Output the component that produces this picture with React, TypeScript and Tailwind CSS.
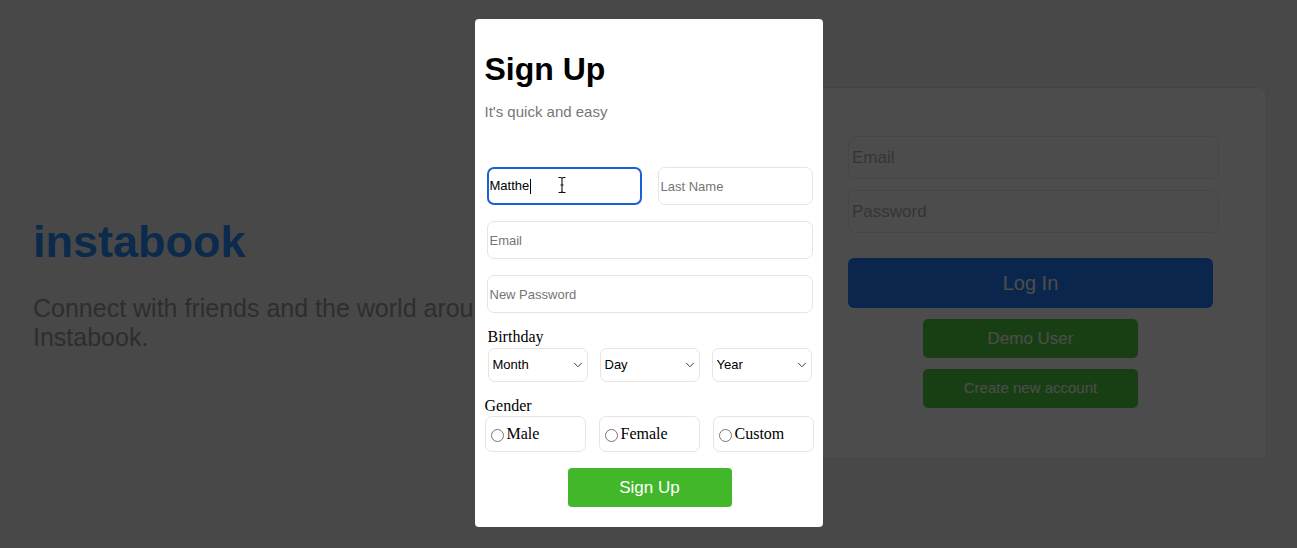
import { ChevronDown } from "lucide-react";

const sans = "font-['Liberation_Sans',Arial,sans-serif]";
const serif = "font-['Liberation_Serif','Times_New_Roman',serif]";

const BirthSelect = ({ label, options }: { label: string; options: string[] }) => (
  <div className="relative w-[100px] h-[34px]">
    <select
      defaultValue={label}
      className={`${sans} appearance-none w-full h-full rounded-[7px] border border-[#ebe3e3] bg-white pl-[4px] text-[13px] text-black outline-none`}
    >
      <option>{label}</option>
      {options.map((o) => (
        <option key={o}>{o}</option>
      ))}
    </select>
    <ChevronDown
      size={14}
      strokeWidth={1.6}
      className="absolute right-[3px] top-[10px] text-[#333] pointer-events-none"
    />
  </div>
);

const GenderOption = ({ label }: { label: string }) => (
  <label className="flex items-center w-[101px] h-[36px] rounded-[7px] border border-[#ebe3e3]">
    <input type="radio" name="gender" className="ml-[5px] mr-[3px] mt-[3px] w-[13px] h-[13px]" />
    <span className={`${serif} text-[16px] leading-[18px] text-black`}>{label}</span>
  </label>
);

const App = () => {
  const months = ["Jan", "Feb", "Mar"];
  const days = ["1", "2", "3"];
  const years = ["2024", "2023", "2022"];

  return (
    <div className={`${sans} relative flex h-[548px] w-full overflow-hidden bg-[#f2f2f2]`}>
      {/* left intro */}
      <div className="shrink-0 w-[633px] pl-[33px] pt-[216px]">
        <h1 className="text-[45px] leading-[52px] font-bold text-[#2a8cff]">instabook</h1>
        <p className="mt-[26px] w-[580px] text-[25px] leading-[29px] text-[#999]">
          Connect with friends and the world around you on Instabook.
        </p>
      </div>

      {/* login card */}
      <div className="ml-auto mr-[30px] mt-[87px] w-[467px] h-[372px] shrink-0 rounded-[8px] border border-[#e5e5e5] bg-white pl-[47px] pt-[48px]">
        <input
          placeholder="Email"
          className="block w-[371px] h-[43px] rounded-[7px] border border-[#ececec] px-[3px] text-[17px] placeholder:text-[#b0b0b0] outline-none"
        />
        <input
          type="password"
          placeholder="Password"
          className="block mt-[11px] w-[371px] h-[43px] rounded-[7px] border border-[#ececec] px-[3px] text-[17px] placeholder:text-[#b0b0b0] outline-none"
        />
        <button className="block mt-[25px] w-[365px] h-[50px] rounded-[6px] bg-[#2480ff] text-[20px] text-white">
          Log In
        </button>
        <button className="block mt-[11px] ml-[75px] w-[215px] h-[39px] rounded-[5px] bg-[#52d442] text-[17px] text-white">
          Demo User
        </button>
        <button className="block mt-[11px] ml-[75px] w-[215px] h-[39px] rounded-[5px] bg-[#52d442] text-[15px] text-white">
          Create new account
        </button>
      </div>

      {/* modal overlay */}
      <div className="absolute inset-0 flex justify-center items-start pt-[19px] bg-[rgba(0,0,0,0.7)]">
        <div className="w-[348px] rounded-[4px] bg-white pb-[20px]">
          <h2 className="ml-[10px] mt-[32px] text-[32px] leading-[37px] font-bold text-black">Sign Up</h2>
          <p className="ml-[10px] mt-[15px] text-[15px] leading-[17px] text-[#777]">It's quick and easy</p>

          <div className="ml-[12px] mt-[47px] flex gap-[16px]">
            <div className="relative flex items-center w-[155px] h-[38px] rounded-[7px] border-2 border-[#1a62d3] pl-[1px] text-[13px] text-black">
              <span>Matthe</span>
              <span className="ml-[1px] w-[1px] h-[15px] bg-black" />
              <svg
                width="10"
                height="18"
                viewBox="0 0 10 18"
                className="absolute left-[68px] top-[7px]"
              >
                <path
                  d="M1.5 1.5h2q1.5 0 1.5 1.5q0-1.5 1.5-1.5h2M5 3v12M1.5 16.5h2q1.5 0 1.5-1.5q0 1.5 1.5 1.5h2M3.5 9h3"
                  fill="none"
                  stroke="#fff"
                  strokeWidth="2.6"
                  strokeLinecap="round"
                />
                <path
                  d="M1.5 1.5h2q1.5 0 1.5 1.5q0-1.5 1.5-1.5h2M5 3v12M1.5 16.5h2q1.5 0 1.5-1.5q0 1.5 1.5 1.5h2M3.5 9h3"
                  fill="none"
                  stroke="#111"
                  strokeWidth="1.1"
                />
              </svg>
            </div>
            <input
              placeholder="Last Name"
              className="w-[155px] h-[38px] rounded-[7px] border border-[#ebe3e3] px-[2px] text-[13px] placeholder:text-[#757575] outline-none"
            />
          </div>
          <input
            placeholder="Email"
            className="block ml-[12px] mt-[16px] w-[326px] h-[38px] rounded-[7px] border border-[#ebe3e3] px-[2px] text-[13px] placeholder:text-[#757575] outline-none"
          />
          <input
            type="password"
            placeholder="New Password"
            className="block ml-[12px] mt-[16px] w-[326px] h-[38px] rounded-[7px] border border-[#ebe3e3] px-[2px] text-[13px] placeholder:text-[#757575] outline-none"
          />

          <div className={`${serif} ml-[13px] mt-[15px] text-[16px] leading-[18px] text-black`}>Birthday</div>
          <div className="ml-[13px] mt-[2px] flex gap-[12px]">
            <BirthSelect label="Month" options={months} />
            <BirthSelect label="Day" options={days} />
            <BirthSelect label="Year" options={years} />
          </div>

          <div className={`${serif} ml-[10px] mt-[15px] text-[16px] leading-[18px] text-black`}>Gender</div>
          <div className="ml-[10px] mt-[1px] flex gap-[13px]">
            <GenderOption label="Male" />
            <GenderOption label="Female" />
            <GenderOption label="Custom" />
          </div>

          <button className="block ml-[93px] mt-[16px] w-[164px] h-[39px] rounded-[4px] bg-[#42b72a] text-[17px] text-white">
            Sign Up
          </button>
        </div>
      </div>
    </div>
  );
};

export default App;
